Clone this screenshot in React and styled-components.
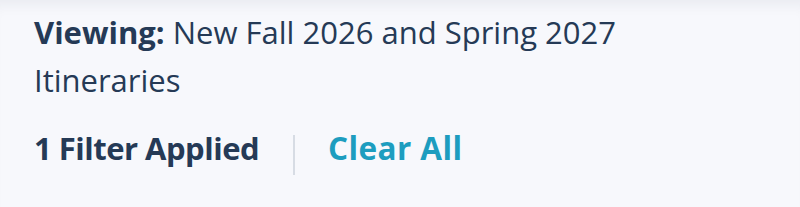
import React from "react";
import styled, { createGlobalStyle } from "styled-components";

const Global = createGlobalStyle`
  html, body { margin: 0; padding: 0; background: #f7f8fc; }
  body { font-family: "Open Sans", "Noto Sans", sans-serif; }
`;

const Page = styled.div`
  width: 800px;
  height: 207px;
  box-sizing: border-box;
  background: #f7f8fc;
  box-shadow: inset 0 14px 14px -10px rgba(30, 40, 70, 0.07);
  padding: 9px 34px 0 34px;
`;

const Viewing = styled.p`
  margin: 0;
  width: 700px;
  font-size: 31px;
  line-height: 47.5px;
  color: #253a56;
  font-weight: 400;
`;

const Label = styled.span`
  font-weight: 700;
`;

const FilterRow = styled.div`
  display: flex;
  align-items: flex-start;
  margin-top: 20px;
`;

const Count = styled.span`
  font-size: 31px;
  font-weight: 700;
  letter-spacing: -0.5px;
  color: #253a56;
  line-height: 48px;
`;

const Divider = styled.span`
  width: 2px;
  height: 40px;
  margin-top: 10.5px;
  background: #d7dce4;
  margin-left: 34px;
  margin-right: 33px;
`;

const ClearButton = styled.button`
  border: 0;
  background: none;
  padding: 0;
  font-family: inherit;
  font-size: 31.5px;
  font-weight: 700;
  letter-spacing: 0.4px;
  color: #1d9dbf;
  line-height: 48px;
  cursor: pointer;
`;

export default function App() {
  return (
    <>
      <Global />
      <Page>
        <Viewing>
          <Label>Viewing:</Label> New Fall 2026 and Spring 2027 Itineraries
        </Viewing>
        <FilterRow>
          <Count>1 Filter Applied</Count>
          <Divider />
          <ClearButton>Clear All</ClearButton>
        </FilterRow>
      </Page>
    </>
  );
}
